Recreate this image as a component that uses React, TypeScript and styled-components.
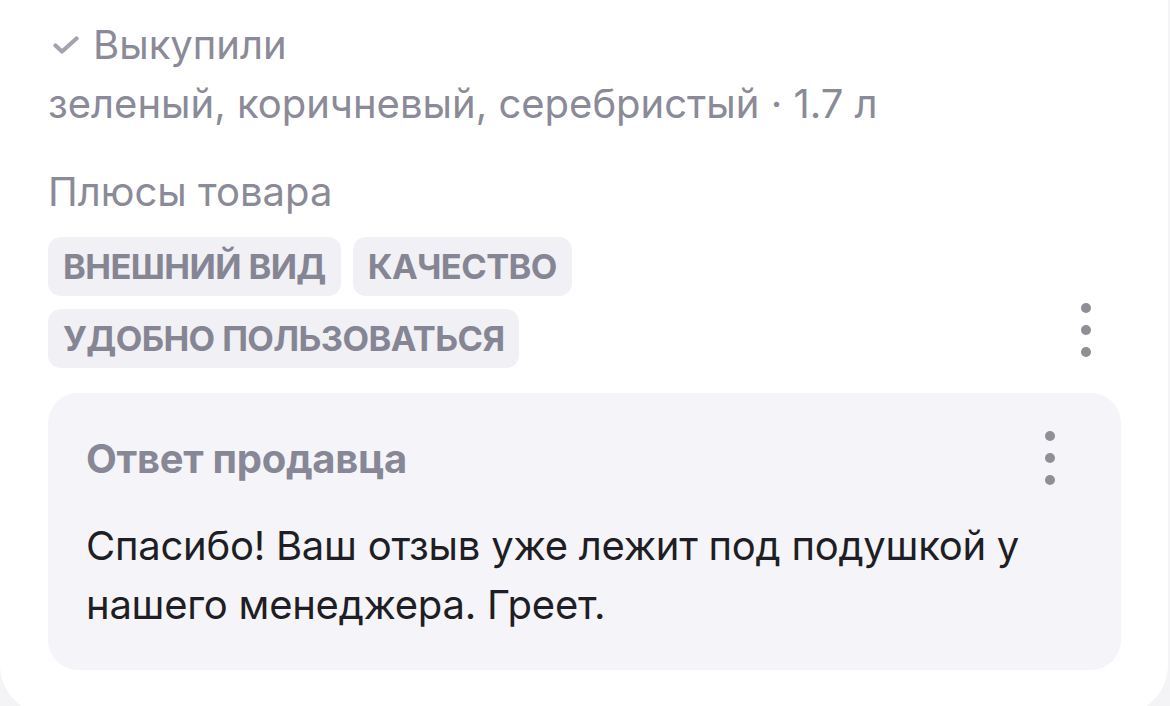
import React from "react";
import styled, { createGlobalStyle } from "styled-components";

const Global = createGlobalStyle`
  html, body { margin: 0; padding: 0; overflow: hidden; }
  body {
    background: #f4f4f7;
    font-family: Inter, "Noto Sans", Roboto, sans-serif;
    -webkit-font-smoothing: antialiased;
  }
`;

const Card = styled.section`
  box-sizing: border-box;
  width: 1168px;
  min-height: 714px;
  background: #ffffff;
  border-radius: 0 0 52px 52px;
  padding: 15px 47px 46px 48px;
  display: flex;
  flex-direction: column;
`;

const Muted = styled.div`
  color: #8a8a98;
  font-size: 40px;
  line-height: 59px;
`;

const PurchasedRow = styled(Muted)`
  display: flex;
  align-items: center;
  gap: 14px;
  padding-left: 5px;
`;

const SectionTitle = styled(Muted)`
  margin-top: 29px;
`;

const TagsArea = styled.div`
  margin-top: 16px;
  display: flex;
  align-items: flex-end;
  gap: 12px;
`;

const TagList = styled.div`
  flex: 1;
  display: flex;
  flex-wrap: wrap;
  gap: 13px 12px;
`;

const Tag = styled.span`
  height: 59px;
  padding: 0 15px;
  border-radius: 13px;
  background: #f0f0f5;
  color: #858594;
  font-weight: 700;
  font-size: 34.5px;
  line-height: 59px;
  text-transform: uppercase;
  letter-spacing: -0.6px;
  white-space: nowrap;
`;

const MenuButton = styled.button<{ $shift?: number }>`
  width: 70px;
  height: 70px;
  border: 0;
  padding: 0;
  background: transparent;
  display: flex;
  flex-direction: column;
  align-items: center;
  justify-content: center;
  gap: 12px;
  margin-bottom: ${(p) => p.$shift ?? 0}px;
  flex: none;
`;

const Dot = styled.span`
  width: 10px;
  height: 10px;
  border-radius: 50%;
  background: #8f8f96;
`;

const Reply = styled.div`
  margin-top: 25px;
  background: #f5f5f9;
  border-radius: 30px;
  padding: 30px 36px 36px 38px;
`;

const ReplyHeader = styled.div`
  display: flex;
  align-items: center;
  justify-content: space-between;
`;

const ReplyTitle = styled.div`
  color: #878796;
  font-weight: 700;
  font-size: 40px;
  line-height: 59px;
  letter-spacing: -0.3px;
`;

const ReplyText = styled.p`
  margin: 23px 0 0;
  color: #1e1e24;
  font-size: 40px;
  line-height: 59px;
  letter-spacing: -0.25px;
  max-width: 960px;
`;

const Check = () => (
  <svg width="26" height="18" viewBox="0 0 26 18" fill="none">
    <path
      d="M2.5 9.5 L9 15.5 L23.5 2.5"
      stroke="#a3a3ad"
      strokeWidth="4.2"
      strokeLinecap="round"
      strokeLinejoin="round"
    />
  </svg>
);

const Menu = ({ shift }: { shift?: number }) => (
  <MenuButton $shift={shift} aria-label="Меню">
    <Dot />
    <Dot />
    <Dot />
  </MenuButton>
);

const tags = ["Внешний вид", "Качество", "Удобно пользоваться"];

export default function App() {
  return (
    <>
      <Global />
      <Card>
        <PurchasedRow>
          <Check />
          <span>Выкупили</span>
        </PurchasedRow>
        <Muted>зеленый, коричневый, серебристый · 1.7 л</Muted>
        <SectionTitle>Плюсы товара</SectionTitle>
        <TagsArea>
          <TagList>
            {tags.map((t) => (
              <Tag key={t}>{t}</Tag>
            ))}
          </TagList>
          <Menu shift={3} />
        </TagsArea>
        <Reply>
          <ReplyHeader>
            <ReplyTitle>Ответ продавца</ReplyTitle>
            <Menu />
          </ReplyHeader>
          <ReplyText>
            Спасибо! Ваш отзыв уже лежит под подушкой у нашего менеджера. Греет.
          </ReplyText>
        </Reply>
      </Card>
    </>
  );
}
